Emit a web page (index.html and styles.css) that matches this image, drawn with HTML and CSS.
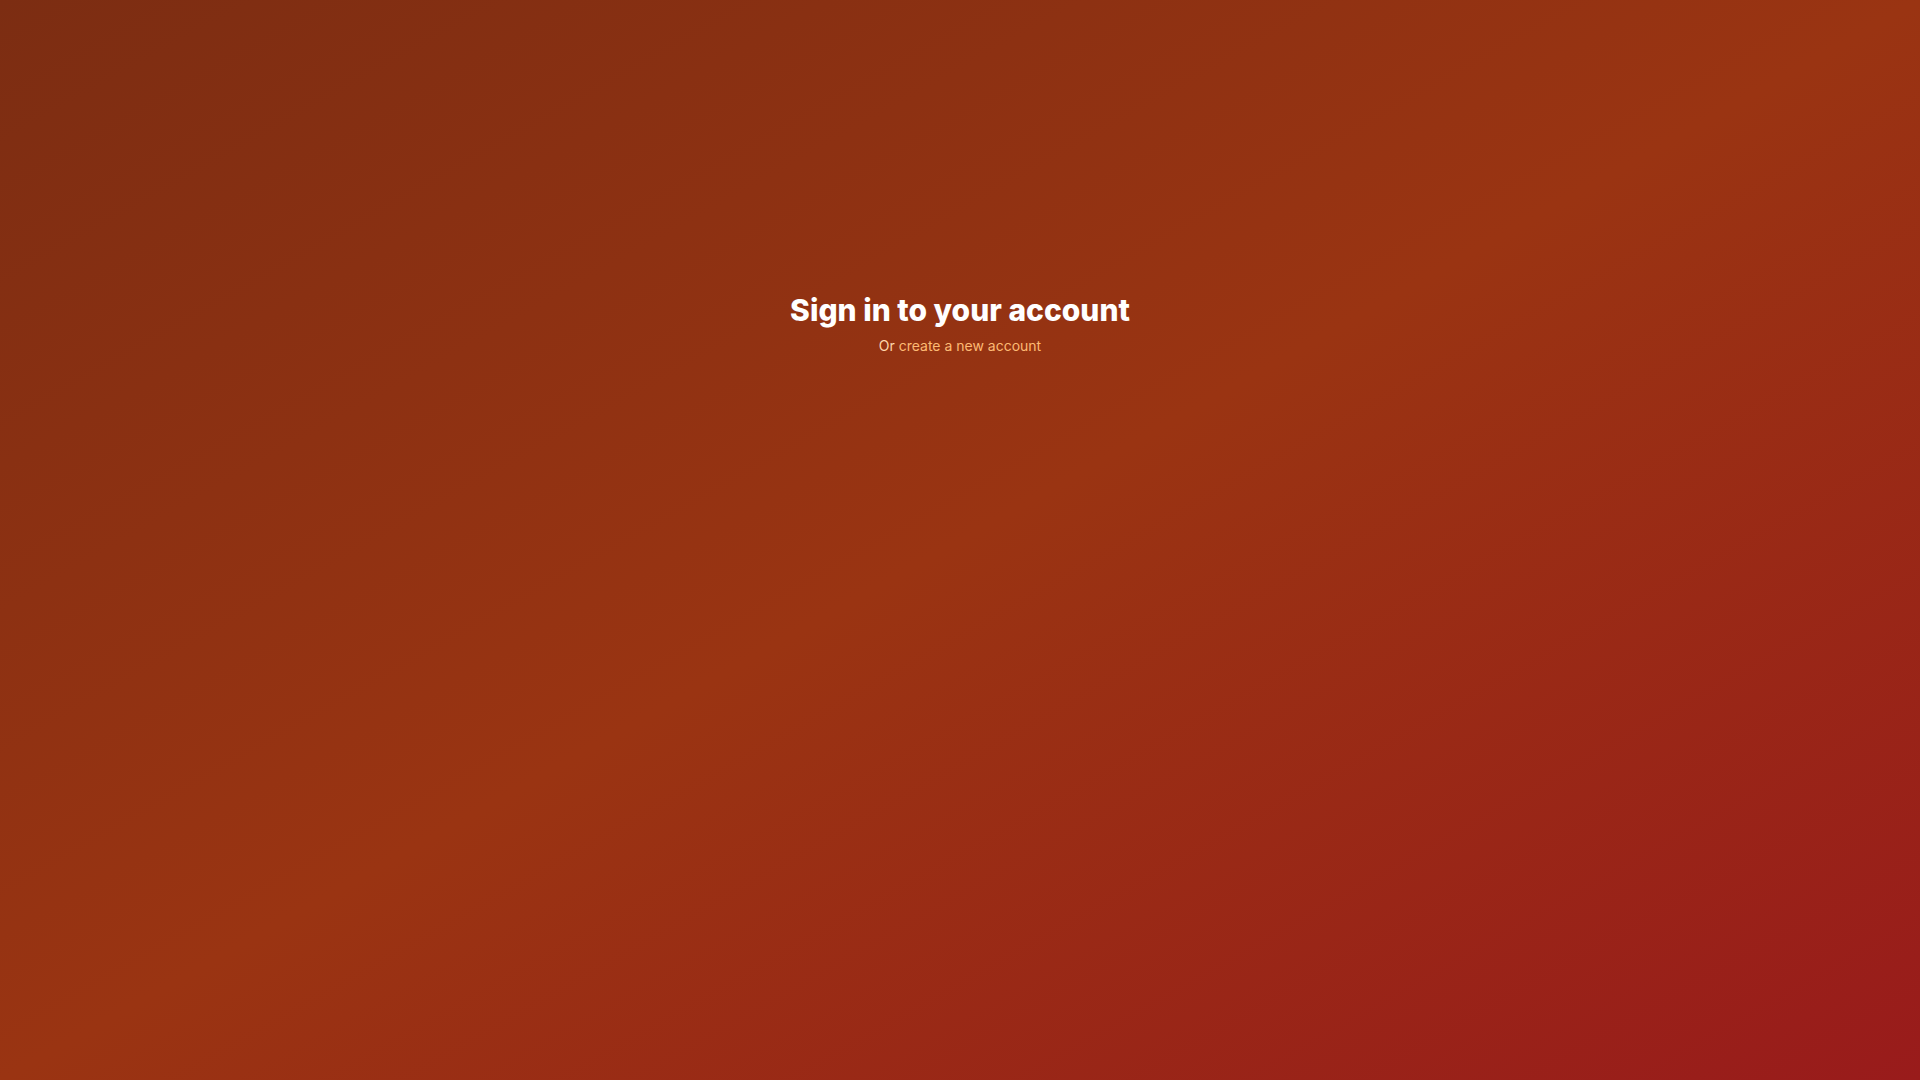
FILE: index.html
```html
<!DOCTYPE html>
<html lang="en">
<head>
<meta charset="utf-8">
<title>Sign in</title>
<link rel="stylesheet" href="styles.css">
</head>
<body>
<main class="page">
  <div class="header">
    <h2 class="title">Sign in to your account</h2>
    <p class="subtitle">Or <a href="#" class="link">create a new account</a></p>
  </div>
</main>
</body>
</html>
```
FILE: styles.css
```css
html, body {
  margin: 0;
  padding: 0;
  height: 100%;
}
body {
  font-family: Inter, "Noto Sans", "Liberation Sans", sans-serif;
  background: linear-gradient(to bottom right, #7c2d12 0%, #9a3412 50%, #991b1b 100%);
  min-height: 100vh;
}
.page {
  min-height: 100vh;
  box-sizing: border-box;
  padding-top: 292px;
  display: flex;
  flex-direction: column;
  align-items: center;
}
.header {
  text-align: center;
}
.title {
  margin: 0;
  font-size: 30px;
  line-height: 36px;
  font-weight: 800;
  color: #ffffff;
}
.subtitle {
  margin: 8px 0 0;
  font-size: 14px;
  line-height: 20px;
  color: #fed7aa;
}
.link {
  color: #fdba74;
  text-decoration: none;
  font-weight: 400;
}
```
